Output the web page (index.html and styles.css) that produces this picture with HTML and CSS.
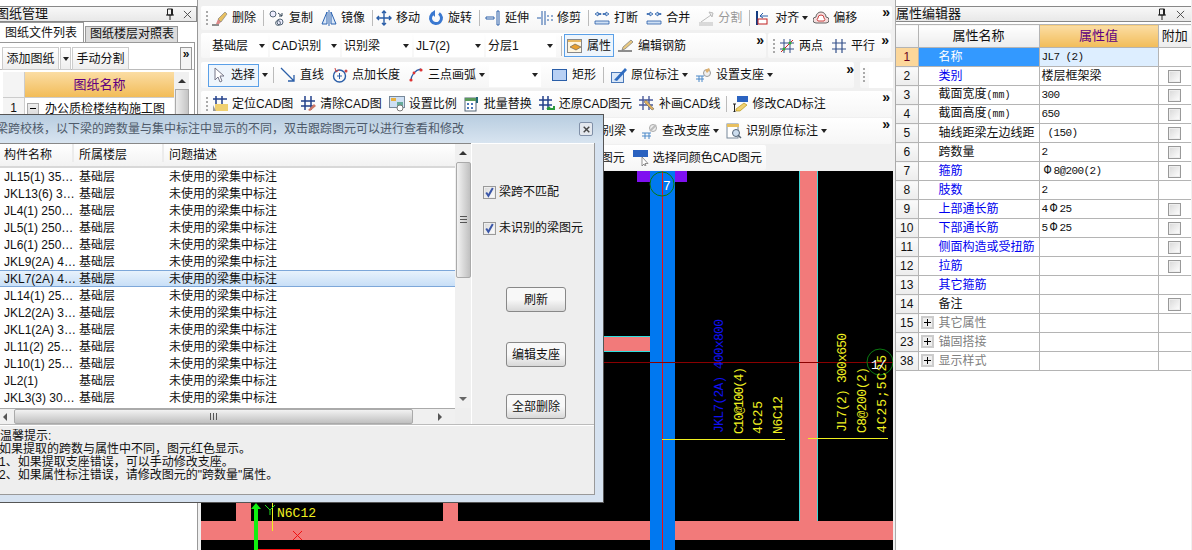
FILE: index.html
```html
<!DOCTYPE html>
<html lang="zh">
<head>
<meta charset="utf-8">
<title>属性编辑器</title>
<link rel="stylesheet" href="styles.css">
</head>
<body>
<svg class="defs" aria-hidden="true">
  <symbol id="i-del" viewBox="0 0 16 16"><path d="M0 15h7" stroke="#222" fill="none"/><path d="M4 14l2-5 3 3-2 2z" fill="#d88"/><path d="M6 9l7-7 2 2-6 8z" fill="#e8c060" stroke="#777" stroke-width=".6"/></symbol>
  <symbol id="i-copy" viewBox="0 0 16 16"><circle cx="4" cy="4" r="3" fill="#eef" stroke="#567"/><circle cx="11" cy="12" r="3" fill="#eef" stroke="#567"/><circle cx="9" cy="13" r="2.4" fill="none" stroke="#567"/><path d="M9 3l4 3M13 3v3h-3" stroke="#345" fill="none"/></symbol>
  <symbol id="i-mirror" viewBox="0 0 16 16"><path d="M6 2L1 14h5zM10 2l5 12h-5z" fill="#dbe8f8" stroke="#2a62b0"/><path d="M8 0v16" stroke="#2a62b0"/></symbol>
  <symbol id="i-move" viewBox="0 0 16 16"><path d="M8 1v14M1 8h14M6 3l2-2 2 2M6 13l2 2 2-2M3 6L1 8l2 2M13 6l2 2-2 2" stroke="#2a5ea8" stroke-width="1.4" fill="none"/></symbol>
  <symbol id="i-rot" viewBox="0 0 16 16"><path d="M6 3a5.5 5.5 0 1 0 5 .5" stroke="#3a78d0" stroke-width="3" fill="none"/><path d="M7 0v7L3 3z" fill="#3a78d0"/></symbol>
  <symbol id="i-ext" viewBox="0 0 16 16"><path d="M14 1v14h-2V1zM1 7h8v2H1z" fill="#fff" stroke="#2a5ea8"/></symbol>
  <symbol id="i-trim" viewBox="0 0 16 16"><path d="M5 1v14M8 1v14" stroke="#2a5ea8"/><path d="M0 8h4M10 6h2M10 10h2M14 6h2M14 10h2" stroke="#2a5ea8"/></symbol>
  <symbol id="i-brk" viewBox="0 0 16 16"><path d="M1 11h14v3H1zM1 4l3-2v1.500h3v1H4V6zM15 4l-3-2v1.500H9v1h3V6z" fill="#cfe0f4" stroke="#2a5ea8" stroke-width=".8"/></symbol>
  <symbol id="i-brk2" viewBox="0 0 16 16"><path d="M1 11h14v3H1zM7 4L4 2v1.500H1v1h3V6zM9 4l3-2v1.500h3v1h-3V6z" fill="#cfe0f4" stroke="#2a5ea8" stroke-width=".8"/></symbol>
  <symbol id="i-split" viewBox="0 0 16 16"><path d="M1 13h14M1 15h14M3 12L13 5M11 2l4 1-1 4z" stroke="#bbb" fill="#eee"/></symbol>
  <symbol id="i-align" viewBox="0 0 16 16"><path d="M2 1v14" stroke="#123a80" stroke-width="2"/><rect x="3" y="9" width="9" height="5" fill="#fff" stroke="#c02020"/><path d="M5 6h8M5 6l3-3M5 6l3 2" stroke="#2a5ea8" fill="none"/></symbol>
  <symbol id="i-off" viewBox="0 0 16 16"><path d="M3 13a3 3 0 0 1 0-6 5 5 0 0 1 10 0 3 3 0 0 1 0 6z" fill="#f5dcdc" stroke="#666"/><path d="M5 11a2 2 0 0 1 0-3 3 3 0 0 1 6 0 2 2 0 0 1 0 3z" fill="#fff" stroke="#c44"/></symbol>
  <symbol id="i-prop" viewBox="0 0 16 16"><rect x=".5" y="1.500" width="14" height="13" fill="#fff6e0" stroke="#888"/><path d="M1 2h13v2H1z" fill="#e8b860"/><path d="M3 9l5-3 6 3-5 3z" fill="#e8a030" stroke="#555" stroke-width=".6"/></symbol>
  <symbol id="i-edit" viewBox="0 0 16 16"><path d="M0 13h14" stroke="#222"/><path d="M4 12l1-3 8-7 2 2-8 7z" fill="#e8c880" stroke="#777" stroke-width=".7"/></symbol>
  <symbol id="i-two" viewBox="0 0 16 16"><path d="M5 1v14M11 1v14M1 5h14M1 11h14" stroke="#34508a"/><path d="M2 14L14 2" stroke="#c22"/><circle cx="5" cy="11" r="1.500" fill="#3a3"/><circle cx="11" cy="5" r="1.500" fill="#3a3"/></symbol>
  <symbol id="i-par" viewBox="0 0 16 16"><path d="M5 1v14M11 1v14M1 5h14M1 11h14" stroke="#34508a" stroke-width="1.200"/></symbol>
  <symbol id="i-cur" viewBox="0 0 16 16"><path d="M4 1v12l3-3 2 5 2-1-2-5h4z" fill="#fff" stroke="#778"/></symbol>
  <symbol id="i-line" viewBox="0 0 16 16"><path d="M1 1l13 13M14 8v6H8" stroke="#2a5ea8" stroke-width="1.300" fill="none"/></symbol>
  <symbol id="i-len" viewBox="0 0 16 16"><circle cx="7.500" cy="9" r="6" fill="none" stroke="#2a5ea8" stroke-width="1.400"/><path d="M7.500 6v6M5 9h5" stroke="#2a5ea8"/><path d="M3 1l1 4 3-2" fill="none" stroke="#c44"/><circle cx="14" cy="4" r="1.500" fill="#c44"/></symbol>
  <symbol id="i-arc" viewBox="0 0 16 16"><path d="M3 14C3 8 7 3 13 2" fill="none" stroke="#2a5ea8" stroke-width="1.300"/><circle cx="3" cy="13" r="1.600" fill="#d33"/><circle cx="13" cy="3" r="1.600" fill="#d33"/><circle cx="6" cy="6" r="1.400" fill="#d33"/></symbol>
  <symbol id="i-rect" viewBox="0 0 16 16"><rect x=".5" y="2.500" width="14" height="11" fill="#b8d0f4" stroke="#2a5ea8"/></symbol>
  <symbol id="i-orig" viewBox="0 0 16 16"><rect x=".5" y="5.500" width="12" height="10" fill="#dbe8f8" stroke="#4a78b8"/><path d="M3 13L14 1l2 2L6 14z" fill="#2f6cc0"/></symbol>
  <symbol id="i-sup" viewBox="0 0 16 16"><path d="M0 9h8M0 12h8M3 9v6M6 9v6" stroke="#4a88c8"/><circle cx="11" cy="6" r="3.500" fill="#eee" stroke="#999"/><path d="M9 3l4-2 1 2-3 3z" fill="#dcb070"/></symbol>
  <symbol id="i-loc" viewBox="0 0 16 16"><path d="M4 0v11M10 0v11M1 3h14" stroke="#23408a" stroke-width="1.500"/><rect x="3" y="8" width="13" height="7" fill="#f0d070"/><path d="M1 9l3 6h-3z" fill="#999"/></symbol>
  <symbol id="i-clr" viewBox="0 0 16 16"><path d="M5 0v14M11 0v14M1 5h14M1 10h14" stroke="#23408a" stroke-width="1.500"/><path d="M8 14l6-6 2 2-6 5z" fill="#c76"/></symbol>
  <symbol id="i-scale" viewBox="0 0 16 16"><rect x=".5" y=".5" width="15" height="11" fill="#cfe0f4" stroke="#789"/><rect x="2" y="2" width="5" height="3" fill="#e8b040"/><rect x="8" y="6" width="6" height="4" fill="#6a9"/><circle cx="11" cy="12" r="3" fill="#fff" stroke="#777"/></symbol>
  <symbol id="i-batch" viewBox="0 0 16 16"><rect x="1" y="2" width="11" height="13" fill="#fff" stroke="#567"/><path d="M1 2h11v3H1z" fill="#5a9a5a"/><path d="M3 7h2v2H3zM7 7h2v2H7zM3 11h2v2H3zM7 11h2v2H7z" fill="#4a78b8"/><path d="M13 1v6" stroke="#267" stroke-width="2"/></symbol>
  <symbol id="i-rest" viewBox="0 0 16 16"><path d="M4 0v14M9 0v14M0 4h13M0 9h13" stroke="#23408a" stroke-width="1.500"/><path d="M8 13h7v-3M8 13l3-2" stroke="#2a9a3a" stroke-width="2" fill="none"/></symbol>
  <symbol id="i-draw" viewBox="0 0 16 16"><path d="M4 0v14M10 0v14M0 4h14M0 9h14" stroke="#4a5a9a" stroke-width="1.400"/><path d="M5 6l8 8 2-1-8-9z" fill="#e0b060" stroke="#555" stroke-width=".5"/></symbol>
  <symbol id="i-cad" viewBox="0 0 16 16"><rect x="5" y="0" width="11" height="6" fill="#2a62c0"/><path d="M4 13l8-6 3 2-7 6H4z" fill="#f0d070" stroke="#a80" stroke-width=".6"/><path d="M1 8h3M2.500 8v8M1 16h3" stroke="#222"/></symbol>
  <symbol id="i-chk" viewBox="0 0 16 16"><path d="M0 10h9M0 13h9M3 10v6M7 10v6" stroke="#4a88c8"/><circle cx="11" cy="5" r="3.500" fill="#eee" stroke="#aaa"/><path d="M8 8l6-6" stroke="#bbb" stroke-width="2"/></symbol>
  <symbol id="i-ident" viewBox="0 0 16 16"><rect x="1" y="1" width="11" height="14" fill="#fff" stroke="#789"/><path d="M1 1h12v3H1z" fill="#e8c060"/><circle cx="10" cy="10" r="3.500" fill="#cde" stroke="#567"/><path d="M12 12l3 3" stroke="#567" stroke-width="1.500"/></symbol>
  <symbol id="i-samec" viewBox="0 0 16 16"><rect width="15" height="7" y="0" fill="#2a62c0"/><path d="M9 7v9l2-2 1 2 1-.5-1-2h3z" fill="#fff" stroke="#666" stroke-width=".7"/></symbol>
  <symbol id="i-pin" viewBox="0 0 10 12"><path d="M2.500 1h5v6h-5zM1 7h8M5 7v5M6.500 1v6" stroke="#222" fill="none"/></symbol>
  <symbol id="i-x" viewBox="0 0 10 10"><path d="M1 1l8 8M9 1l-8 8" stroke="#444" fill="none"/></symbol>
</svg>

<aside class="left">
  <div class="dock-title"><span class="dock-name clip">图纸管理</span><svg class="pin"><use href="#i-pin"/></svg><svg class="close"><use href="#i-x"/></svg></div>
  <div class="tabs"><span class="tab on">图纸文件列表</span><span class="tab">图纸楼层对照表</span></div>
  <div class="left-box">
    <div class="left-tools">
      <span class="lbtn">添加图纸</span><span class="lbtn arrow-btn"><i class="arrow"></i></span><span class="lbtn">手动分割</span>
      <span class="more-btn">»</span>
    </div>
    <div class="left-table">
      <div class="lt-main">
        <div class="lt-head"><span class="lt-gut"></span><span class="lt-name">图纸名称</span></div>
        <div class="lt-row"><span class="lt-gut num">1</span><span class="lt-cell"><i class="minus"></i>办公质检楼结构施工图</span></div>
      </div>
      <div class="lt-scroll"><i class="up"></i><span class="lt-thumb"></span></div>
    </div>
  </div>
</aside>

<main class="mid">
  <div class="tb r1">
    <i class="grip"></i>
    <span class="it"><svg class="ic"><use href="#i-del"/></svg>删除</span><i class="sep"></i>
    <span class="it"><svg class="ic"><use href="#i-copy"/></svg>复制</span>
    <span class="it"><svg class="ic"><use href="#i-mirror"/></svg>镜像</span><i class="sep tight"></i>
    <span class="it"><svg class="ic"><use href="#i-move"/></svg>移动</span>
    <span class="it"><svg class="ic"><use href="#i-rot"/></svg>旋转</span><i class="sep"></i>
    <span class="it"><svg class="ic"><use href="#i-ext"/></svg>延伸</span>
    <span class="it"><svg class="ic"><use href="#i-trim"/></svg>修剪</span><i class="sep"></i>
    <span class="it"><svg class="ic"><use href="#i-brk"/></svg>打断</span>
    <span class="it"><svg class="ic"><use href="#i-brk2"/></svg>合并</span>
    <span class="it dim"><svg class="ic"><use href="#i-split"/></svg>分割</span><i class="sep"></i>
    <span class="it hasarrow"><svg class="ic"><use href="#i-align"/></svg>对齐<i class="arrow"></i></span>
    <span class="it"><svg class="ic"><use href="#i-off"/></svg>偏移</span>
    <b class="more">»</b>
  </div>
  <div class="r2">
    <div class="tb r2a">
      <span class="combo w58">基础层<i class="arrow"></i></span>
      <span class="combo">CAD识别<i class="arrow"></i></span>
      <span class="combo">识别梁<i class="arrow"></i></span>
      <span class="combo">JL7(2)<i class="arrow"></i></span>
      <span class="combo">分层1<i class="arrow"></i></span>
      <i class="sep sep2"></i>
      <span class="it active"><svg class="ic"><use href="#i-prop"/></svg>属性</span>
      <span class="it"><svg class="ic"><use href="#i-edit"/></svg>编辑钢筋</span>
      <b class="more">»</b>
    </div>
    <div class="tb r2b">
      <i class="grip"></i>
      <span class="it"><svg class="ic"><use href="#i-two"/></svg>两点</span>
      <span class="it"><svg class="ic"><use href="#i-par"/></svg>平行</span>
      <b class="more">»</b>
    </div>
  </div>
  <div class="r3">
    <div class="tb r3a">
      <span class="it active sel"><svg class="ic"><use href="#i-cur"/></svg>选择</span><i class="arrow solo"></i><i class="sep sep3"></i>
      <span class="it"><svg class="ic"><use href="#i-line"/></svg>直线</span>
      <span class="it"><svg class="ic"><use href="#i-len"/></svg>点加长度</span>
      <span class="it"><svg class="ic"><use href="#i-arc"/></svg>三点画弧</span><i class="arrow solo"></i>
      <span class="combo w52"><i class="arrow"></i></span>
      <span class="it rect"><svg class="ic"><use href="#i-rect"/></svg>矩形</span><i class="sep wide"></i>
      <span class="it"><svg class="ic"><use href="#i-orig"/></svg>原位标注</span><i class="arrow solo"></i>
      <span class="it sup"><svg class="ic"><use href="#i-sup"/></svg>设置支座</span><i class="arrow solo"></i>
      <b class="more">»</b>
    </div>
    <div class="tb r3b"><i class="grip"></i><span class="stub"></span></div>
  </div>
  <div class="tb r4">
    <i class="grip"></i>
    <span class="it"><svg class="ic"><use href="#i-loc"/></svg>定位CAD图</span>
    <span class="it"><svg class="ic"><use href="#i-clr"/></svg>清除CAD图</span>
    <span class="it"><svg class="ic"><use href="#i-scale"/></svg>设置比例</span>
    <span class="it"><svg class="ic"><use href="#i-batch"/></svg>批量替换</span>
    <span class="it"><svg class="ic"><use href="#i-rest"/></svg>还原CAD图元</span>
    <span class="it"><svg class="ic"><use href="#i-draw"/></svg>补画CAD线</span><i class="sep"></i>
    <span class="it"><svg class="ic"><use href="#i-cad"/></svg>修改CAD标注</span>
    <b class="more">»</b>
  </div>
  <div class="tb r5">
    <span class="it first5">识别梁</span><i class="arrow solo a5"></i>
    <span class="it"><svg class="ic"><use href="#i-chk"/></svg>查改支座</span><i class="arrow solo a5b"></i>
    <span class="it"><svg class="ic"><use href="#i-ident"/></svg>识别原位标注</span><i class="arrow solo"></i>
    <b class="more">»</b>
  </div>
  <div class="tb r6">
    <span class="it">选择同图层CAD图元</span>
    <span class="it"><svg class="ic"><use href="#i-samec"/></svg>选择同颜色CAD图元</span>
  </div>

  <svg class="canvas" viewBox="201 171 692 379" preserveAspectRatio="none">
    <rect x="201" y="171" width="692" height="379" fill="#000"/>
    <rect x="201" y="521" width="692" height="19" fill="#f27a7a"/>
    <rect x="799" y="171" width="19" height="350" fill="#f27a7a"/>
    <path d="M799.500 171v350M817.500 171v350" stroke="#3cd8d8"/>
    <rect x="604" y="336" width="46" height="15" fill="#f27a7a"/>
    <path d="M604 336.500h46M604 351.500h46" stroke="#2ee0e0"/>
    <rect x="236" y="503" width="15" height="18" fill="#f27a7a"/>
    <rect x="443" y="503" width="15" height="18" fill="#f27a7a"/>
    <rect x="637" y="171" width="50" height="11" fill="#7f10f0"/>
    <rect x="650" y="171" width="25" height="379" fill="#0078f0"/>
    <path d="M662.500 171v379" stroke="#f01010"/>
    <path d="M604 362.500h289" stroke="#8a0000"/>
    <circle cx="662" cy="184" r="12" fill="none" stroke="#0a7a10"/>
    <text class="cad white" x="663" y="190">7</text>
    <circle cx="880" cy="362" r="13" fill="none" stroke="#0a7a10"/>
    <text class="cad blue" transform="translate(723 433) rotate(-90)" textLength="114">JKL7(2A) 400x800</text>
    <text class="cad yel" transform="translate(743 434) rotate(-90)" textLength="67">C10@100(4)</text>
    <text class="cad yel" transform="translate(762 434) rotate(-90)" textLength="33">4C25</text>
    <text class="cad yel" transform="translate(782 434) rotate(-90)" textLength="38">N6C12</text>
    <path d="M662 439.500h123M808 438.500h80" stroke="#f0f020"/>
    <text class="cad yel" transform="translate(846 432) rotate(-90)" textLength="99">JL7(2) 300x650</text>
    <text class="cad yel" transform="translate(866 433) rotate(-90)" textLength="66">C8@200(2)</text>
    <text class="cad yel" transform="translate(886 433) rotate(-90)" textLength="78">4C25;5C25</text>
    <text class="cad white" x="871" y="369" textLength="15">1/</text>
    <path d="M272.500 503v28" stroke="#f0f020"/>
    <text class="cad yel" x="277" y="517" textLength="39">N6C12</text>
    <path d="M265 505l5 5 5-5M270 510v5" stroke="#20e020" fill="none"/>
    <path d="M293 531l9 9M302 531l-9 9" stroke="#f01010"/>
    <path d="M254 550v-41h-3l5-6 5 6h-3v41z" fill="#10f010"/>
    <path d="M258 549.500h42" stroke="#f01010"/>
  </svg>
</main>

<aside class="right">
  <div class="dock-title"><span class="dock-name">属性编辑器</span><svg class="pin"><use href="#i-pin"/></svg><svg class="close"><use href="#i-x"/></svg></div>
  <table class="props">
    <colgroup><col class="c1"><col class="c2"><col class="c3"><col class="c4"></colgroup>
    <tr class="head"><th></th><th>属性名称</th><th class="hot">属性值</th><th>附加</th></tr>
    <tr class="cur"><td class="g">1</td><td class="n">名称</td><td class="v">JL7 (2)</td><td></td></tr>
    <tr><td class="g">2</td><td class="n link">类别</td><td class="zh">楼层框架梁</td><td class="c"><i class="cb"></i></td></tr>
    <tr><td class="g">3</td><td class="n">截面宽度<span class="mm">(mm)</span></td><td class="v">300</td><td class="c"><i class="cb"></i></td></tr>
    <tr><td class="g">4</td><td class="n">截面高度<span class="mm">(mm)</span></td><td class="v">650</td><td class="c"><i class="cb"></i></td></tr>
    <tr><td class="g">5</td><td class="n">轴线距梁左边线距</td><td class="v">&nbsp;(150)</td><td class="c"><i class="cb"></i></td></tr>
    <tr><td class="g">6</td><td class="n">跨数量</td><td class="v">2</td><td class="c"><i class="cb"></i></td></tr>
    <tr><td class="g">7</td><td class="n link">箍筋</td><td class="v"><span class="rb">Φ</span>8@200(2)</td><td class="c"><i class="cb"></i></td></tr>
    <tr><td class="g">8</td><td class="n link">肢数</td><td class="v">2</td><td></td></tr>
    <tr><td class="g">9</td><td class="n link">上部通长筋</td><td class="v">4<span class="rb">Φ</span>25</td><td class="c"><i class="cb"></i></td></tr>
    <tr><td class="g">10</td><td class="n link">下部通长筋</td><td class="v">5<span class="rb">Φ</span>25</td><td class="c"><i class="cb"></i></td></tr>
    <tr><td class="g">11</td><td class="n link">侧面构造或受扭筋</td><td></td><td class="c"><i class="cb"></i></td></tr>
    <tr><td class="g">12</td><td class="n link">拉筋</td><td></td><td class="c"><i class="cb"></i></td></tr>
    <tr><td class="g">13</td><td class="n link">其它箍筋</td><td></td><td></td></tr>
    <tr><td class="g">14</td><td class="n">备注</td><td></td><td class="c"><i class="cb"></i></td></tr>
    <tr><td class="g">15</td><td class="n grp"><i class="plus"></i>其它属性</td><td></td><td></td></tr>
    <tr><td class="g">23</td><td class="n grp"><i class="plus"></i>锚固搭接</td><td></td><td></td></tr>
    <tr><td class="g">38</td><td class="n grp"><i class="plus"></i>显示样式</td><td></td><td></td></tr>
  </table>
</aside>

<section class="dialog">
  <div class="dlg-title"><span class="dlg-text">梁跨校核，以下梁的跨数量与集中标注中显示的不同，双击跟踪图元可以进行查看和修改</span><span class="dlg-x"><svg><use href="#i-x"/></svg></span></div>
  <div class="dlg-body">
    <div class="dlg-main">
      <div class="dlg-left">
        <div class="dlg-top">
          <div class="list">
            <div class="lrow lhead"><span>构件名称</span><span>所属楼层</span><span>问题描述</span></div>
            <div class="lrow"><span>JL15(1) 35…</span><span>基础层</span><span>未使用的梁集中标注</span></div>
            <div class="lrow"><span>JKL13(6) 3…</span><span>基础层</span><span>未使用的梁集中标注</span></div>
            <div class="lrow"><span>JL4(1) 250…</span><span>基础层</span><span>未使用的梁集中标注</span></div>
            <div class="lrow"><span>JL5(1) 250…</span><span>基础层</span><span>未使用的梁集中标注</span></div>
            <div class="lrow"><span>JL6(1) 250…</span><span>基础层</span><span>未使用的梁集中标注</span></div>
            <div class="lrow"><span>JKL9(2A) 4…</span><span>基础层</span><span>未使用的梁集中标注</span></div>
            <div class="lrow picked"><span>JKL7(2A) 4…</span><span>基础层</span><span>未使用的梁集中标注</span></div>
            <div class="lrow"><span>JL14(1) 25…</span><span>基础层</span><span>未使用的梁集中标注</span></div>
            <div class="lrow"><span>JKL2(2A) 3…</span><span>基础层</span><span>未使用的梁集中标注</span></div>
            <div class="lrow"><span>JKL1(2A) 3…</span><span>基础层</span><span>未使用的梁集中标注</span></div>
            <div class="lrow"><span>JL11(2) 25…</span><span>基础层</span><span>未使用的梁集中标注</span></div>
            <div class="lrow"><span>JL10(1) 25…</span><span>基础层</span><span>未使用的梁集中标注</span></div>
            <div class="lrow"><span>JL2(1)</span><span>基础层</span><span>未使用的梁集中标注</span></div>
            <div class="lrow"><span>JKL3(3) 30…</span><span>基础层</span><span>未使用的梁集中标注</span></div>
          </div>
          <div class="vscroll"><i class="up"></i><span class="vthumb"><i class="vgrip"></i></span><i class="down"></i></div>
        </div>
        <div class="hscroll"><i class="lt"></i><span class="hthumb"><i class="hgrip"></i></span><i class="rt"></i></div>
      </div>
      <div class="dlg-side">
        <label class="chk first"><i class="cb on"><svg viewBox="0 0 10 10"><path d="M2 5l2 3 4-7" stroke="#3a56a8" stroke-width="1.800" fill="none"/></svg></i>梁跨不匹配</label>
        <label class="chk"><i class="cb on"><svg viewBox="0 0 10 10"><path d="M2 5l2 3 4-7" stroke="#3a56a8" stroke-width="1.800" fill="none"/></svg></i>未识别的梁图元</label>
        <span class="btn b1">刷新</span>
        <span class="btn b2">编辑支座</span>
        <span class="btn b3">全部删除</span>
      </div>
    </div>
    <div class="hint">
      <p>温馨提示:</p>
      <p class="in">如果提取的跨数与属性中不同，图元红色显示。</p>
      <p class="in">1、如果提取支座错误，可以手动修改支座。</p>
      <p class="in">2、如果属性标注错误，请修改图元的"跨数量"属性。</p>
    </div>
  </div>
</section>
</body>
</html>
```
FILE: styles.css
```css
* { box-sizing: border-box; }
html, body { margin: 0; height: 100%; }
body {
  width: 1192px; height: 550px; overflow: hidden; position: relative;
  display: flex; background: #f0f0f0; color: #111;
  font: 12px/16px "Liberation Sans", "Noto Sans CJK SC", sans-serif;
}
i { font-style: normal; display: block; }
.defs { position: absolute; width: 0; height: 0; }

/* docks */
.left { width: 198px; height: 550px; background: #fff; border-right: 1px solid #999; padding-top: 6px; flex: none; }
.right { width: 296px; height: 550px; margin-left: 2px; background: #fff; border-left: 1px solid #aaa; padding-top: 6px; flex: none; }
.dock-title {
  height: 16px; display: flex; align-items: center; border: 1px solid #888; border-left: 0;
  background: linear-gradient(#f8f8f8, #e8e8e8); font-size: 13px; white-space: nowrap;
}
.dock-name { flex: 1; }
.clip { margin-left: -4px; }
.pin { width: 10px; height: 12px; margin-right: 8px; }
.close { width: 9px; height: 9px; margin-right: 4px; }
.right .dock-title { border-right: 0; }
.right .pin { margin-right: 9px; }
.right .close { margin-right: 6px; }

.tabs { display: flex; align-items: flex-end; height: 20px; margin-top: 0; }
.tab { height: 16px; padding: 0 3px 0 4px; margin-left: 1px; background: #dcdcdc; border: 1px solid #999; border-bottom: 0; line-height: 15px; white-space: nowrap; }
.tab.on { height: 20px; width: 84px; margin-left: 0; padding: 2px 0 0 5px; background: #fff; border-left: 0; line-height: 16px; }
.left-box { margin-right: 2px; height: 72px; border-top: 1px solid #999; border-right: 1px solid #999; padding-top: 4px; overflow: hidden; }
.left-tools { display: flex; height: 23px; padding-left: 2px; gap: 1px; position: relative; border-bottom: 1px solid #bbb; }
.lbtn { width: 57px; height: 23px; border: 1px solid #ccc; background: linear-gradient(#fff, #eee); display: flex; align-items: center; justify-content: center; }
.arrow-btn { width: 11px; margin: 0; }
.more-btn { margin-left: auto; margin-right: 2px; width: 12px; height: 23px; border: 1px solid #999; text-align: center; font-weight: 700; line-height: 12px; background: #f4f4f4; }
.left-table { display: flex; margin: 2px 0 0 3px; }
.lt-main { width: 171px; }
.lt-head, .lt-row { display: flex; }
.lt-head { height: 25px; }
.lt-gut { width: 22px; background: #f4f4f4; border-right: 1px solid #ccc; flex: none; }
.lt-gut.num { text-align: center; padding-top: 2px; }
.lt-name { flex: 1; display: flex; align-items: center; justify-content: center; color: #5f0080; font-size: 13px; background: linear-gradient(#fbdda4, #f2bc58); }
.lt-row { height: 20px; border-top: 1px solid #ccc; }
.lt-cell { display: flex; align-items: center; height: 15px; margin-top: 3px; padding-left: 2px; white-space: nowrap; }
.minus { width: 12px; height: 12px; margin-right: 6px; border: 1px solid #aaa; background: linear-gradient(#eee, #ddd) ; position: relative; }
.minus::after { content: ""; position: absolute; left: 2px; right: 2px; top: 4px; height: 1px; background: #000; }
.lt-scroll { width: 15px; background: #f0f0f0; display: flex; flex-direction: column; align-items: center; padding-top: 7px; }
.lt-thumb { width: 14px; height: 30px; margin-top: 6px; background: linear-gradient(90deg, #eee, #c4c4c4); border: 1px solid #aaa; }

/* toolbars */
.mid { width: 692px; flex: none; margin-left: 3px; padding-top: 6px; position: relative; display: flex; flex-direction: column; height: 550px; }
.tb { display: flex; align-items: center; background: linear-gradient(#fff, #f6f6f6); border-radius: 2px; white-space: nowrap; position: relative; }
.r1 { height: 24px; width: 691px; padding-left: 5px; }
.r2 { display: flex; height: 25px; margin-top: 3px; gap: 2px; }
.r2a { width: 565px; padding-left: 9px; }
.r2b { width: 123px; padding-left: 5px; }
.r3 { display: flex; height: 26px; margin-top: 4px; gap: 6px; }
.r3a { width: 657px; padding-left: 7px; }
.r3b { width: 33px; padding-left: 3px; }
.r4 { height: 26px; margin-top: 3px; width: 691px; padding-left: 5px; }
.r4 .it { margin-right: 7px; }
.r5 { height: 26px; margin-top: 1px; width: 691px; }
.r6 { height: 25px; margin-top: 1px; width: 565px; justify-content: flex-end; }
.r6 .it:last-child { margin-right: 4px; }
.grip { width: 2px; height: 14px; margin-right: 4px; background: repeating-linear-gradient(#aaa 0 2px, transparent 2px 4px); }
.it { display: flex; align-items: center; margin-right: 8px; height: 100%; }
.ic { width: 16px; height: 16px; margin-right: 4px; flex: none; }
.sep { width: 1px; height: 16px; background: #bbb; margin: 0 5px 0 -1px; flex: none; }
.sep.tight { margin-right: 3px; }
.sep.wide { margin-right: 7px; }
.sep2 { margin: 0 2px 0 3px; height: 20px; }
.sep3 { margin: 0 6px 0 -2px; }
.dim { color: #999; }
.arrow { width: 0; height: 0; border: 3.500px solid transparent; border-top: 4px solid #222; border-bottom: 0; flex: none; }
.arrow.solo { margin: 0 7px 0 -5px; }
.hasarrow .arrow { margin-left: 3px; }
.hasarrow { margin-right: 5px; }
.more { position: absolute; right: 2px; top: 0; font-size: 14px; line-height: 12px; font-weight: 700; }
.r2 .more, .r3 .more { top: 1px; }
.r3a .more { right: 0; }
.combo { width: 70px; height: 23px; margin-right: 2px; padding-left: 2px; background: #fff; display: flex; align-items: center; justify-content: space-between; padding-right: 3px; flex: none; }
.w58 { width: 58px; }
.w52 { width: 52px; margin: 0 11px 0 -3px; justify-content: flex-end; }
.active { border: 1px solid #5aa0e8; background: #eef5fc; height: 23px; margin-right: 4px; padding: 0 2px; }
.sel { padding-left: 2px; margin-right: 8px; width: 51px; }
.sup { margin-left: 1px; }
.rect { margin-right: 8px; }
.stub { width: 24px; height: 26px; background: #fff; }
.first5 { margin: 0 8px 0 389px; }
.a5 { margin: 0 2px 0 -5px; }
.a5b { margin-right: 5px; }

.canvas { position: absolute; left: 0; top: 171px; width: 692px; height: 379px; }
.cad { font-family: "Liberation Mono", monospace; font-size: 13px; }
.yel { fill: #f0f020; }
.blue { fill: #1010f0; }
.white { fill: #fff; }

/* properties */
.props { border-collapse: collapse; table-layout: fixed; width: 295px; margin-top: 2px; border-top: 1px solid #b4b4b4; }
.props col.c1 { width: 22px; }
.props col.c2 { width: 121px; }
.props col.c3 { width: 119px; }
.props td, .props th { border: 1px solid #b4b4b4; height: 19px; padding: 0; font-weight: 400; white-space: nowrap; overflow: hidden; line-height: 16px; }
.props td:first-child, .props th:first-child { border-left: 0; }
.props td:last-child, .props th:last-child { border-right: 0; }
.head th { height: 23px; font-size: 13px; background: linear-gradient(#fff, #ececec); }
.props .hot { color: #5f0080; background: linear-gradient(#fbdda4, #f2bc58); }
.g { text-align: center; background: linear-gradient(#fafafa, #ececec); }
.n { padding-left: 20px !important; }
.v { padding-left: 2px !important; font-family: "Liberation Mono", "Noto Sans CJK SC", monospace; font-size: 11px; letter-spacing: -.6px; }
.rb { display: inline-block; width: 12px; text-align: center; font-size: 12px; letter-spacing: 0; }
.mm { font-family: "Liberation Mono", monospace; font-size: 10px; }
.zh { padding-left: 2px !important; }
.link { color: #0000f0; }
.grp { color: #808080; padding-left: 2px !important; }
.plus { display: inline-block; width: 13px; height: 13px; margin-right: 5px; border: 2px solid #ccc; background: #eee; vertical-align: -2px; position: relative; }
.plus::before, .plus::after { content: ""; position: absolute; background: #000; }
.plus::before { left: 1px; right: 1px; top: 4px; height: 1px; }
.plus::after { top: 1px; bottom: 1px; left: 4px; width: 1px; }
.cur .g { background: #fcd79a; color: #6a0020; }
.cur .n { background: #3399ff; color: #fff; }
.cur .v { background: #ddeeff; }
.c { text-align: center; }
.cb { display: inline-block; width: 13px; height: 13px; border: 1px solid #999; background: linear-gradient(135deg, #d8d8d8, #fff); box-shadow: inset 0 0 0 1px #eee; vertical-align: middle; }

/* dialog */
.dialog { position: absolute; left: 0; top: 114px; width: 604px; height: 389px; background: #d6e2f0; border: 1px solid #555; border-left: 0; display: flex; flex-direction: column; overflow: hidden; }
.dlg-title { height: 28px; flex: none; display: flex; align-items: center; justify-content: space-between; padding-right: 10px; background: linear-gradient(#b8cde0, #d8e4f0); color: #4e5a6a; white-space: nowrap; }
.dlg-text { margin-left: -4px; }
.dlg-x { width: 14px; height: 14px; border: 1px solid #8090a8; border-radius: 2px; background: #e4e8ee; display: flex; align-items: center; justify-content: center; }
.dlg-x svg { width: 7px; height: 7px; stroke-width: 2; }
.dlg-body { flex: 1; margin: 0 8px 7px 0; background: #eee; border-bottom: 1px solid #999; border-right: 1px solid #999; display: flex; flex-direction: column; }
.dlg-main { height: 282px; display: flex; border-bottom: 1px solid #bbb; flex: none; }
.dlg-left { width: 471px; flex: none; border-top: 1px solid #888; }
.dlg-top { height: 264px; display: flex; }
.list { width: 455px; background: #fff; overflow: hidden; flex: none; }
.lrow { display: grid; grid-template-columns: 75px 90px 1fr; height: 17px; align-items: center; white-space: nowrap; overflow: hidden; padding-left: 4px; }
.lrow.picked { background: linear-gradient(#e8f2fc, #c8dff7); border: 1px solid #7da7d9; border-width: 1px 0; }
.lhead { height: 24px; background: linear-gradient(#fff, #f2f2f2); border-bottom: 2px solid #d8d8d8; font-size: 12px; }
.lhead span + span { position: relative; }
.lhead span + span::before { content: ""; position: absolute; left: -7px; top: -5px; height: 20px; width: 2px; background: #ececec; }
.vscroll { width: 16px; background: #f0f0f0; display: flex; flex-direction: column; align-items: center; padding-top: 7px; position: relative; }
.up { width: 0; height: 0; border: 4px solid transparent; border-bottom: 4px solid #333; border-top: 0; }
.down { width: 0; height: 0; border: 4px solid transparent; border-top: 4px solid #666; border-bottom: 0; margin-top: auto; margin-bottom: 7px; }
.vthumb { width: 15px; height: 116px; margin-top: 7px; background: linear-gradient(90deg, #f2f2f2, #c0c0c0); border: 1px solid #aaa; border-radius: 2px; display: flex; align-items: center; justify-content: center; }
.vgrip { width: 7px; height: 8px; background: repeating-linear-gradient(#555 0 1px, transparent 1px 3px); }
.hscroll { height: 16px; width: 455px; display: flex; align-items: center; background: #f0f0f0; border-top: 1px solid #aaa; }
.lt { width: 0; height: 0; border: 4px solid transparent; border-right: 4px solid #555; border-left: 0; margin: 0 7px 0 3px; flex: none; }
.rt { width: 0; height: 0; border: 4px solid transparent; border-left: 4px solid #555; border-right: 0; margin-left: 25px; flex: none; }
.hthumb { width: 399px; height: 15px; background: linear-gradient(#f2f2f2, #c0c0c0); border: 1px solid #aaa; border-radius: 2px; display: flex; align-items: center; justify-content: center; }
.hgrip { width: 8px; height: 7px; background: repeating-linear-gradient(90deg, #555 0 1px, transparent 1px 3px); }
.dlg-side { flex: 1; border-left: 1px solid #fff; border-top: 1px solid #fff; display: flex; flex-direction: column; align-items: flex-start; padding-left: 11px; }
.chk { display: flex; align-items: center; gap: 3px; height: 14px; white-space: nowrap; }
.chk.first { margin-top: 41px; margin-bottom: 22px; }
.cb.on { flex: none; padding: 0; }
.cb.on svg { display: block; width: 11px; height: 11px; }
.btn { width: 60px; height: 25px; margin-left: 23px; border: 1px solid #888; border-radius: 3px; background: linear-gradient(#f8f8f8 0 50%, #d8d8d8); display: flex; align-items: center; justify-content: center; }
.b1 { margin-top: 52px; }
.b2 { margin-top: 30px; }
.b3 { margin-top: 27px; }
.hint { flex: 1; padding-top: 4px; overflow: hidden; white-space: nowrap; border-top: 1px solid #fff; }
.hint p { margin: 0; line-height: 13px; }
.hint .in { margin-left: -1px; }
```
